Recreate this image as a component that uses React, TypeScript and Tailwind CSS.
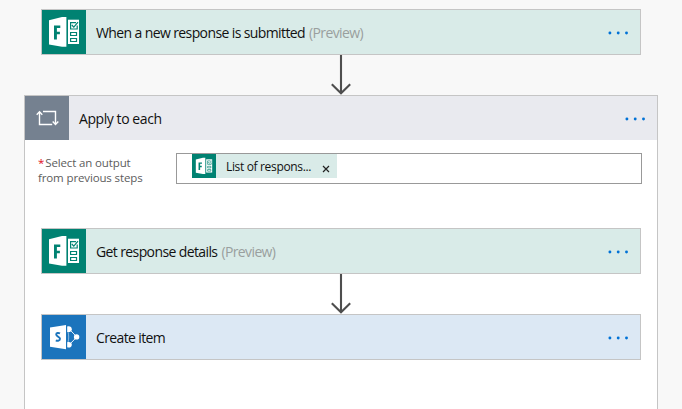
import type { ReactNode } from 'react';

function FormsIcon({ className }: { className: string }) {
  return (
    <svg viewBox="0 0 44 44" className={className}>
      <rect width="44" height="44" fill="#008272" />
      <path d="M7 10.2 20 7.1h4.4v29.7H20L7 34.6Z" fill="#fff" />
      <path d="M12 15.5h6.3v2.6h-3.4v3.6h3v2.5h-3v5.3H12Z" fill="#008272" />
      <path d="M26 9.7h11V34H26Z" fill="#fff" />
      <g fill="none" stroke="#008272" strokeWidth="1.2">
        <path d="M34 12.6h-5.4v6.4h6.6v-3.5" />
        <path d="m29.8 15 2 2.2 4.2-5" />
        <path d="M28.6 22.5h5.9v3h-5.9ZM28.6 28.5h5.9v3h-5.9Z" />
      </g>
    </svg>
  );
}

function SharePointIcon() {
  return (
    <svg viewBox="0 0 44 44" className="size-11 shrink-0">
      <rect width="44" height="44" fill="#1b74bc" />
      <path d="m27 13.8 7.8 8.2-7.8 8" fill="none" stroke="#fff" strokeWidth="0.9" />
      <path d="M26 16.5c.9 3.6.9 7.4 0 11" fill="none" stroke="#fff" strokeWidth="0.5" />
      <path d="M8 12.6 24 10v24.3L8 31.7Z" fill="#fff" />
      <path d="M25.2 11.5c2.6-.8 4.6.5 4.6 2.7 0 2.1-1.9 3.4-4.6 2.7Z" fill="#fff" />
      <circle cx="34.6" cy="21.9" r="2.7" fill="#fff" />
      <path d="M25.2 27.2c2.6-.8 4.6.4 4.6 2.5 0 2.2-1.9 3.4-4.6 2.6Z" fill="#fff" />
      <path
        d="M18 18.4c-1.6-.8-3.8-.6-3.8 1.1 0 2.2 3.8 1.9 3.8 4.3 0 2-2.3 2.4-4.2 1.5"
        fill="none"
        stroke="#1b74bc"
        strokeWidth="1.9"
      />
    </svg>
  );
}

function LoopIcon() {
  return (
    <svg viewBox="0 0 44 44" className="size-11 shrink-0 bg-[#758190]">
      <g fill="none" stroke="#fff" strokeWidth="1.4">
        <path d="M14.5 16v12.5h12.7M18 15.5h12.5V28" />
        <path d="m11.7 18.7 2.8-3 2.8 3M27.7 25.5l2.8 3 2.8-3" />
      </g>
    </svg>
  );
}

function Arrow() {
  return (
    <svg viewBox="0 0 22 40" className="mx-auto block h-10 w-[22px]" fill="none" stroke="#4e4e4e" strokeWidth="2.1">
      <path d="M11 0v38.5M1.8 29.3l9.2 9 9.2-9" />
    </svg>
  );
}

function Dots() {
  return (
    <svg viewBox="0 0 22 4" className="mt-0.5 mr-[11px] ml-auto h-1 w-[22px]" fill="#0072d6">
      <circle cx="2.9" cy="2" r="1.45" />
      <circle cx="11.2" cy="2" r="1.45" />
      <circle cx="19.5" cy="2" r="1.45" />
    </svg>
  );
}

function Card({ icon, color, children }: { icon: ReactNode; color: string; children: ReactNode }) {
  return (
    <div className={`flex h-[46px] w-[600px] items-center border border-[#c5c5c5] ${color}`}>
      {icon}
      <span className="mt-0.5 ml-2.5 whitespace-pre text-[14px] leading-5">{children}</span>
      <Dots />
    </div>
  );
}

export default function App() {
  return (
    <div className="h-[409px] w-[682px] overflow-hidden bg-[#f8f8f8] pt-[9px] pl-6 font-['Open_Sans','Noto_Sans',sans-serif] text-[#111]">
      <div className="ml-[17px] w-[600px]">
        <Card color="bg-[#d9ebe8]" icon={<FormsIcon className="size-11 shrink-0" />}>
          <span className="mr-px tracking-[-0.61px]">When a new response is submitted </span>
          <span className="tracking-[-0.62px] text-[#999f9e]">(Preview)</span>
        </Card>
        <Arrow />
      </div>

      <div className="h-[340px] w-[634px] border border-[#c5c5c5] bg-white">
        <div className="flex h-11 items-center bg-[#e9eaef]">
          <LoopIcon />
          <span className="mt-0.5 ml-2.5 text-[14px] leading-5 tracking-[-0.43px]">Apply to each</span>
          <Dots />
        </div>

        <div className="mt-[13px] flex h-[31px] pl-[13px]">
          <div className="w-[138px] pt-[2px] text-[11.5px] leading-[15px] tracking-[-0.13px] whitespace-nowrap text-[#5c5c5c]">
            <div>
              <span className="mr-px text-[#e00b1c]">*</span>Select an output
            </div>
            <div>from previous steps</div>
          </div>
          <div className="h-[31px] w-[466px] border border-[#999] pl-[15px]">
            <div className="flex h-6 w-[145px] items-center bg-[#d9ebe8]">
              <FormsIcon className="size-6 shrink-0" />
              <span className="mt-0.5 ml-2.5 w-[86px] text-[12px] leading-4 tracking-[-0.34px] whitespace-nowrap">List of respons...</span>
              <svg viewBox="0 0 8 8" className="mt-1.5 ml-[10px] size-2" stroke="#222" strokeWidth="1.2">
                <path d="m1 1 6 6m0-6-6 6" />
              </svg>
            </div>
          </div>
        </div>

        <div className="mt-11 ml-4 w-[600px]">
          <Card color="bg-[#d9ebe8]" icon={<FormsIcon className="size-11 shrink-0" />}>
            <span className="mr-px tracking-[-0.61px]">Get response details </span>
            <span className="tracking-[-0.62px] text-[#999f9e]">(Preview)</span>
          </Card>
          <Arrow />
          <Card color="bg-[#dce8f4]" icon={<SharePointIcon />}>
            <span className="tracking-[-0.62px]">Create item</span>
          </Card>
        </div>
      </div>
    </div>
  );
}
